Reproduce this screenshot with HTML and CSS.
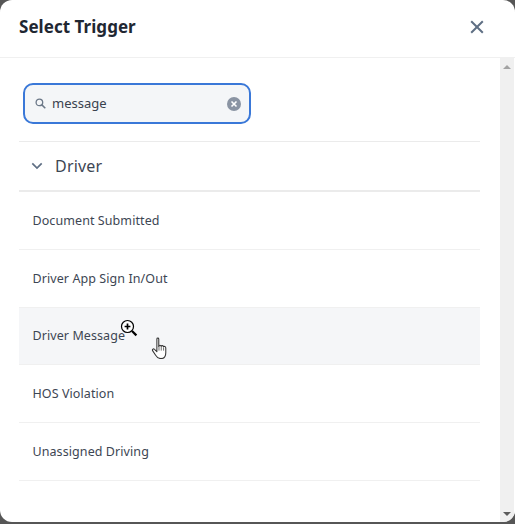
FILE: index.html
```html
<!DOCTYPE html>
<html lang="en">
<head>
    <meta charset="UTF-8">
    <meta name="viewport" content="width=device-width, initial-scale=1.0">
    <title>Select Trigger</title>
    <link rel="stylesheet" href="styles.css">
</head>
<body>
    <div class="modal">
        <div class="modal-header">
            <h2 class="modal-title">Select Trigger</h2>
            <svg class="close-icon" width="14" height="14" viewBox="0 0 14 14">
                <path d="M1.2 1.2 L12.8 12.8 M12.8 1.2 L1.2 12.8" fill="none" stroke="#5f6f84" stroke-width="2"/>
            </svg>
        </div>
        <div class="modal-body">
            <div class="content">
                <div class="search-wrap">
                    <div class="search">
                        <svg class="search-icon" width="11" height="11" viewBox="0 0 11 11">
                            <circle cx="4.4" cy="4.4" r="3.3" fill="none" stroke="#6b7888" stroke-width="1.3"/>
                            <path d="M6.9 6.9 L10.3 10.3" stroke="#6b7888" stroke-width="1.5"/>
                        </svg>
                        <span class="search-text">message</span>
                        <svg class="clear-icon" width="14" height="14" viewBox="0 0 14 14">
                            <circle cx="7" cy="7" r="7" fill="#8a94a3"/>
                            <path d="M4.5 4.5 L9.5 9.5 M9.5 4.5 L4.5 9.5" stroke="#fff" stroke-width="1.6"/>
                        </svg>
                    </div>
                </div>
                <div class="group-header">
                    <svg class="chevron" width="12" height="8" viewBox="0 0 12 8">
                        <path d="M1.3 1.3 L6 6 L10.7 1.3" fill="none" stroke="#5f6f84" stroke-width="1.7"/>
                    </svg>
                    <span class="group-name">Driver</span>
                </div>
                <div class="item">Document Submitted</div>
                <div class="item">Driver App Sign In/Out</div>
                <div class="item hovered">Driver Message</div>
                <div class="item">HOS Violation</div>
                <div class="item">Unassigned Driving</div>
            </div>
            <div class="scrollbar">
                <span class="arrow-up"></span>
                <span class="arrow-down"></span>
            </div>
        </div>
    </div>

    <!-- Mouse cursors caught in the screenshot -->
    <svg class="cursor-zoom" width="20" height="20" viewBox="0 0 20 20">
        <circle cx="7.5" cy="7.5" r="6" fill="#fff" stroke="#000" stroke-width="1.2"/>
        <path d="M4.6 7.5 H10.4 M7.5 4.6 V10.4" stroke="#000" stroke-width="1.7"/>
        <path d="M12 12 L16.4 16.4" stroke="#000" stroke-width="2.2"/>
    </svg>
    <svg class="cursor-hand" width="17" height="22" viewBox="0 0 16 21">
        <path d="M5.5 1.8 C5.5 .8 7.3 .8 7.3 1.8 V9 C7.5 7.6 9.4 7.6 9.6 9 C9.9 7.8 11.6 8 11.8 9.4 C12.2 8.6 14 8.9 14 10.4 V15 C14 18.5 12.4 20.6 9.4 20.6 C6.6 20.6 5.4 19.4 4 17 L1.4 13 C.8 11.8 2.2 10.8 3.2 11.8 L5.5 14 Z" fill="#fff" stroke="#333" stroke-width="1" stroke-linejoin="round"/>
        <path d="M7.5 8 V13 M9.7 9 V13 M11.9 10 V13" stroke="#555" stroke-width=".8"/>
    </svg>
</body>
</html>
```

FILE: styles.css
```css
* {
    box-sizing: border-box;
    margin: 0;
    padding: 0;
}

body {
    width: 515px;
    height: 524px;
    overflow: hidden;
    position: relative;
    background-color: #565656;
    font-family: "Noto Sans", sans-serif;
    color: #333b47;
}

.modal {
    width: 515px;
    height: 522px;
    background-color: #fff;
    border-radius: 12px;
    overflow: hidden;
    display: flex;
    flex-direction: column;
}

.modal-header {
    height: 58px;
    flex-shrink: 0;
    display: flex;
    justify-content: space-between;
    align-items: center;
    padding: 0 31px 4px 19px;
    border-bottom: 1px solid #f0f0f0;
}

.modal-title {
    font-size: 17px;
    font-weight: 700;
    letter-spacing: 0.04px;
    color: #1f2732;
}

.modal-body {
    flex: 1;
    display: flex;
}

.content {
    flex: 1;
    padding: 0 20px 0 19px;
}

.search-wrap {
    height: 84px;
    padding: 25px 0 0 4px;
    border-bottom: 1px solid #ebebeb;
}

.search {
    width: 228px;
    height: 41px;
    display: flex;
    align-items: center;
    padding: 0 8px 0 10px;
    background-color: #f4f6f8;
    border: 2px solid #3a78d8;
    border-radius: 10px;
}

.search-text {
    flex: 1;
    margin: 0 0 2px 6px;
    font-size: 13px;
    color: #39424e;
}

.group-header {
    height: 50px;
    display: flex;
    align-items: center;
    padding-left: 12px;
    border-bottom: 2px solid #ebebeb;
}

.group-name {
    margin-left: 12px;
    font-size: 16px;
    letter-spacing: 0.2px;
    color: #3d4653;
}

.item {
    height: 57.75px;
    display: flex;
    align-items: center;
    padding-left: 13.5px;
    font-size: 12.5px;
    letter-spacing: 0.08px;
    color: #3d4653;
    border-bottom: 1px solid #f0f0f0;
}

.hovered {
    background-color: #f5f6f8;
}

.scrollbar {
    width: 15px;
    display: flex;
    flex-direction: column;
    justify-content: space-between;
    align-items: center;
    padding: 7px 0 6px;
    background-color: #f0f0f0;
    border-right: 1px solid #fff;
}

.arrow-up {
    border-left: 4px solid transparent;
    border-right: 4px solid transparent;
    border-bottom: 4px solid #a3a3a3;
}

.arrow-down {
    border-left: 4px solid transparent;
    border-right: 4px solid transparent;
    border-top: 4px solid #5c5c5c;
}

.cursor-zoom {
    position: absolute;
    left: 120px;
    top: 319px;
}

.cursor-hand {
    position: absolute;
    left: 151px;
    top: 337px;
}
```
